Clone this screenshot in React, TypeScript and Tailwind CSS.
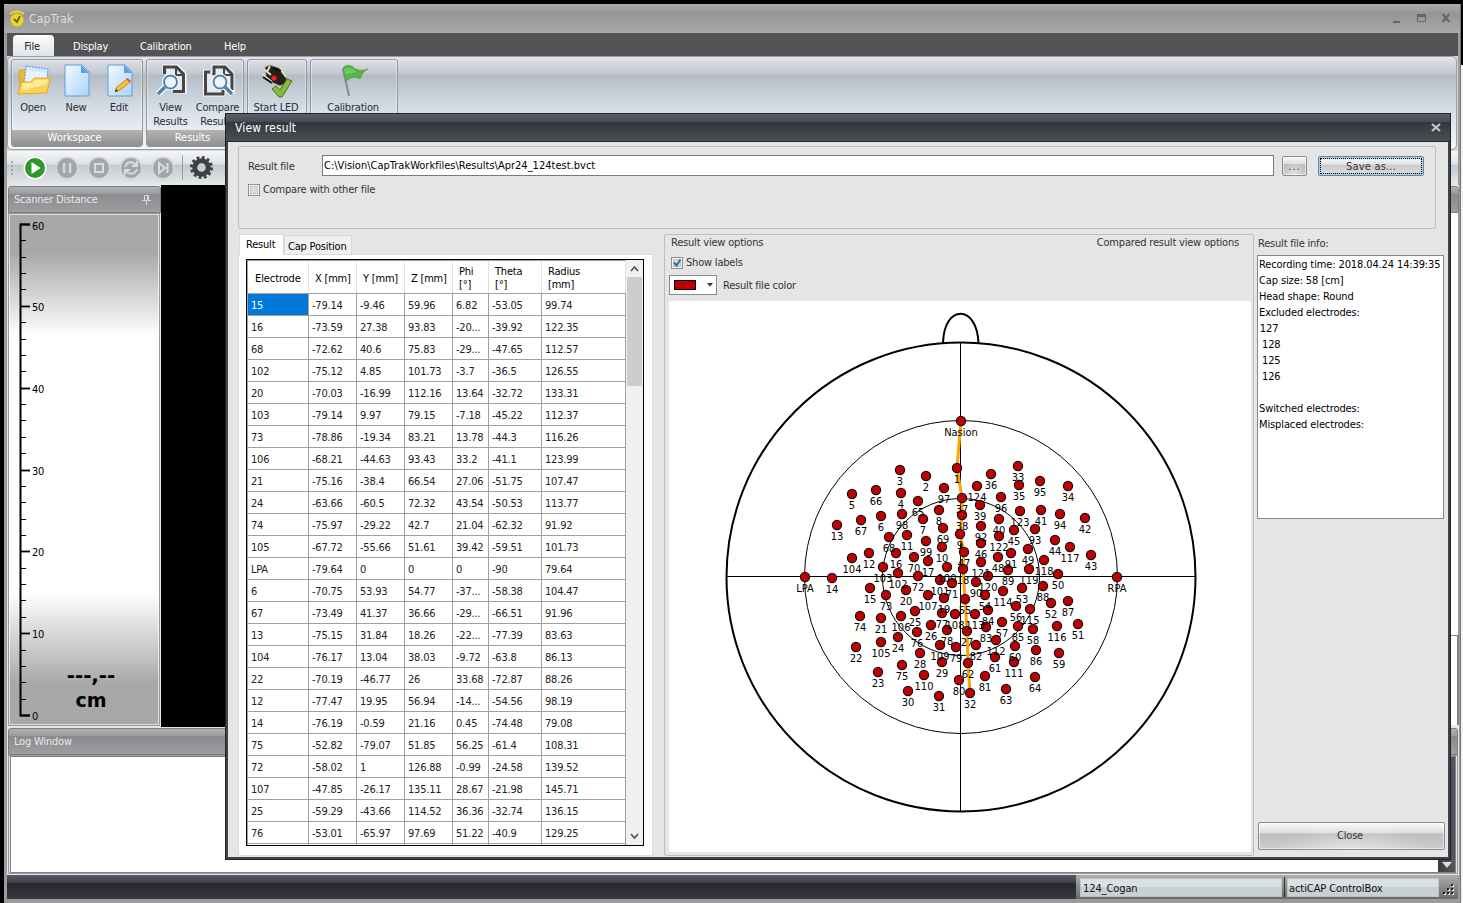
import React from "react";

const ROWS: string[][] = [
  ["15", "-79.14", "-9.46", "59.96", "6.82", "-53.05", "99.74"],
  ["16", "-73.59", "27.38", "93.83", "-20...", "-39.92", "122.35"],
  ["68", "-72.62", "40.6", "75.83", "-29...", "-47.65", "112.57"],
  ["102", "-75.12", "4.85", "101.73", "-3.7", "-36.5", "126.55"],
  ["20", "-70.03", "-16.99", "112.16", "13.64", "-32.72", "133.31"],
  ["103", "-79.14", "9.97", "79.15", "-7.18", "-45.22", "112.37"],
  ["73", "-78.86", "-19.34", "83.21", "13.78", "-44.3", "116.26"],
  ["106", "-68.21", "-44.63", "93.43", "33.2", "-41.1", "123.99"],
  ["21", "-75.16", "-38.4", "66.54", "27.06", "-51.75", "107.47"],
  ["24", "-63.66", "-60.5", "72.32", "43.54", "-50.53", "113.77"],
  ["74", "-75.97", "-29.22", "42.7", "21.04", "-62.32", "91.92"],
  ["105", "-67.72", "-55.66", "51.61", "39.42", "-59.51", "101.73"],
  ["LPA", "-79.64", "0", "0", "0", "-90", "79.64"],
  ["6", "-70.75", "53.93", "54.77", "-37...", "-58.38", "104.47"],
  ["67", "-73.49", "41.37", "36.66", "-29...", "-66.51", "91.96"],
  ["13", "-75.15", "31.84", "18.26", "-22...", "-77.39", "83.63"],
  ["104", "-76.17", "13.04", "38.03", "-9.72", "-63.8", "86.13"],
  ["22", "-70.19", "-46.77", "26", "33.68", "-72.87", "88.26"],
  ["12", "-77.47", "19.95", "56.94", "-14...", "-54.56", "98.19"],
  ["14", "-76.19", "-0.59", "21.16", "0.45", "-74.48", "79.08"],
  ["75", "-52.82", "-79.07", "51.85", "56.25", "-61.4", "108.31"],
  ["72", "-58.02", "1", "126.88", "-0.99", "-24.58", "139.52"],
  ["107", "-47.85", "-26.17", "135.11", "28.67", "-21.98", "145.71"],
  ["25", "-59.29", "-43.66", "114.52", "36.36", "-32.74", "136.15"],
  ["76", "-53.01", "-65.97", "97.69", "51.22", "-40.9", "129.25"],
];

const DOTS: [string, number, number][] = [
  ["Nasion", 961, 421], ["1", 957, 468], ["3", 900, 470], ["2", 926, 476], ["97", 944, 488],
  ["66", 876, 490], ["5", 852, 494], ["4", 901, 493], ["65", 918, 501], ["37", 962, 498],
  ["8", 939, 510], ["98", 902, 514], ["6", 881, 516], ["7", 923, 519], ["67", 861, 520],
  ["38", 962, 515], ["13", 837, 525], ["69", 943, 528], ["11", 907, 535], ["68", 889, 537],
  ["9", 960, 534], ["99", 926, 541], ["10", 942, 547], ["47", 964, 552], ["12", 869, 553],
  ["104", 852, 558], ["16", 896, 553], ["70", 914, 557], ["17", 928, 561], ["33", 1018, 466],
  ["36", 991, 474], ["35", 1019, 485], ["95", 1040, 481], ["34", 1068, 486], ["124", 977, 486],
  ["96", 1001, 497], ["39", 980, 505], ["123", 1020, 511], ["41", 1041, 510], ["94", 1060, 514],
  ["42", 1085, 518], ["40", 999, 519], ["92", 981, 526], ["45", 1014, 530], ["93", 1035, 529],
  ["122", 999, 536], ["44", 1055, 540], ["46", 981, 543], ["117", 1070, 547], ["49", 1028, 549],
  ["91", 1011, 553], ["48", 998, 557], ["43", 1091, 555], ["118", 1044, 560], ["121", 981, 562],
  ["89", 1008, 570], ["119", 1029, 569], ["50", 1058, 574], ["RPA", 1117, 577], ["120", 988, 576],
  ["18", 963, 569], ["90", 976, 582], ["88", 1043, 586], ["53", 1022, 588], ["114", 1003, 591],
  ["54", 985, 595], ["55", 965, 599], ["52", 1051, 603], ["87", 1068, 601], ["56", 1016, 606],
  ["115", 1030, 609], ["84", 988, 610], ["113", 975, 614], ["108", 955, 614], ["57", 1002, 622],
  ["116", 1057, 626], ["51", 1078, 624], ["85", 1018, 626], ["83", 986, 627], ["58", 1033, 629],
  ["27", 967, 631], ["112", 996, 640], ["82", 976, 645], ["79", 956, 647], ["60", 1015, 646],
  ["86", 1036, 650], ["59", 1059, 653], ["61", 995, 657], ["111", 1014, 662], ["62", 968, 663],
  ["81", 985, 676], ["80", 959, 680], ["64", 1035, 677], ["63", 1006, 689], ["32", 970, 693],
  ["100", 947, 567], ["103", 883, 567], ["102", 898, 573], ["72", 918, 576], ["101", 940, 580],
  ["71", 952, 583], ["14", 832, 578], ["15", 870, 588], ["20", 906, 590], ["73", 886, 595],
  ["107", 928, 595], ["19", 944, 598], ["25", 915, 611], ["77", 942, 613], ["74", 860, 616],
  ["106", 901, 616], ["21", 881, 618], ["26", 931, 625], ["78", 947, 630], ["76", 917, 632],
  ["24", 898, 637], ["105", 881, 642], ["109", 940, 645], ["22", 856, 647], ["28", 920, 653],
  ["29", 942, 662], ["75", 902, 665], ["23", 878, 672], ["110", 924, 675], ["30", 908, 691],
  ["31", 939, 696], ["LPA", 805, 577],
];

const MIDLINE = "961,421 957,468 962,498 962,515 960,534 964,552 963,569 965,599 967,631 968,663 970,693";

const OpenIcon = () => (
  <svg width="34" height="34" viewBox="0 0 34 34">
    <path d="M2 8l1-2h7l2 3v20H3z" fill="#f0b72c" stroke="#dc9a1c" strokeWidth=".8" />
    <path d="M9 2l22 3-2 20H6z" fill="#cfe8fb" stroke="#4d9ad6" strokeDasharray="2 1" />
    <path d="M10 6l20 3-2 15H7z" fill="#e4f3fe" />
    <path d="M1 30l3-12h10l3-4h16l-3 15z" fill="#fbd25a" stroke="#eba51f" />
    <path d="M4 27l2-8h9l3-3h13l-1 4z" fill="#fff0a8" opacity=".8" />
  </svg>
);
const PageShape = () => (
  <>
    <defs>
      <linearGradient id="pg" x1="0" y1="0" x2="1" y2="1">
        <stop offset="0" stopColor="#f4faff" />
        <stop offset="1" stopColor="#a9d4f8" />
      </linearGradient>
    </defs>
    <path d="M1 1h17l7 7v24H1z" fill="url(#pg)" stroke="#5c9fdc" />
    <path d="M17 1v8h8z" fill="#5aa2e2" />
  </>
);
const NewIcon = () => (
  <svg width="26" height="34" viewBox="0 0 26 34"><PageShape /></svg>
);
const EditIcon = () => (
  <svg width="26" height="34" viewBox="0 0 26 34">
    <PageShape />
    <path d="M8 28l2-5 10-8 3 3-10 8z" fill="#fbc62d" stroke="#c47c14" />
    <path d="M19 15l2-1 3 3-1 2z" fill="#e4573d" />
    <path d="M8 28l1-3 2 2z" fill="#333" />
  </svg>
);
const ViewIcon = () => (
  <svg width="32" height="34" viewBox="0 0 32 34">
    <path d="M9 10V3h12l7 7v17H17" fill="#eef0f3" stroke="#fff" strokeWidth="5" />
    <path d="M8.500 10V3h12l7 7v17.500H17" fill="#e6e9ee" stroke="#454545" strokeWidth="3" />
    <path d="M20 2v9h8" fill="none" stroke="#454545" strokeWidth="2" />
    <path d="M9 23l-7 7" stroke="#fff" strokeWidth="6" />
    <circle cx="14.500" cy="18" r="8.500" fill="#fff" />
    <circle cx="14.500" cy="18" r="6.500" fill="#edf4fa" stroke="#4f84b0" strokeWidth="2" />
    <path d="M9 23l-7 7" stroke="#4f84b0" strokeWidth="3.500" />
  </svg>
);
const CompareIcon = () => (
  <svg width="32" height="34" viewBox="0 0 32 34">
    <path d="M6 8H2v22h18v-4M11 9V3h11l7 7v17h-5" fill="#eef0f3" stroke="#fff" strokeWidth="5" />
    <path d="M7 8H2.500v22H20v-5" fill="#e6e9ee" stroke="#454545" strokeWidth="3" />
    <path d="M11 11V3h11l7 7v16" fill="#e6e9ee" stroke="#454545" strokeWidth="3" />
    <path d="M21 2v9h8" fill="none" stroke="#454545" strokeWidth="2" />
    <path d="M22 23l7 7" stroke="#fff" strokeWidth="6" />
    <circle cx="17" cy="18" r="8.500" fill="#fff" />
    <circle cx="17" cy="18" r="6.500" fill="#edf4fa" stroke="#4f84b0" strokeWidth="2" />
    <path d="M22 23l7 7" stroke="#4f84b0" strokeWidth="3.500" />
  </svg>
);
const LedIcon = () => (
  <svg width="34" height="34" viewBox="0 0 34 34">
    <path d="M5 3l5-2 9 3 7 8 1 7-7 3-9-4-8-4 3-3z" fill="#26201c" stroke="#b1a48c" />
    <path d="M2 10l10 8M5 6l6 5M10 2l-3 6M25 18l5 4M20 5l6 8" stroke="#e6dcc4" strokeWidth="2" />
    <path d="M3 13l9 6M13 4l8 3" stroke="#15110f" strokeWidth="2" />
    <circle cx="14" cy="14" r="2.500" fill="#f31e1e" />
    <path d="M12 25l4-3 4 4 7-11 5 2-10 16h-3z" fill="#86b93c" stroke="#47751c" />
  </svg>
);
const FlagIcon = () => (
  <svg width="30" height="34" viewBox="0 0 30 34">
    <path d="M4 5l6 27" stroke="#8b8f93" strokeWidth="2.200" />
    <path d="M4 4c4-4 8-3 11 0 4 3 9 3 14 1-5 2-6 6-8 10-4-3-9-2-14 2z" fill="#56b544" stroke="#469c38" strokeWidth=".7" />
    <path d="M5 5c5-3 8 0 12 2-3 4-6 1-11 4z" fill="#7fd06b" opacity=".7" />
  </svg>
);
const Gear = () => (
  <svg width="25" height="25" viewBox="-12.500 -12.500 25 25" className="-ml-[1px]">
    <circle r="10" fill="none" stroke="#3f4144" strokeWidth="3" strokeDasharray="2.800 2.436" />
    <circle r="6.800" fill="none" stroke="#3f4144" strokeWidth="5" />
  </svg>
);

const ToolButton = ({ on, children }: { on?: boolean; children: React.ReactNode }) => (
  <svg width="24" height="24" viewBox="0 0 24 24" className="mr-2">
    <circle cx="12" cy="12" r="11.500" fill={on ? "#fff" : "#d3d6da"} />
    <circle cx="12" cy="12" r="10" fill={on ? "#2f9730" : "#a3a5a7"} />
    {children}
  </svg>
);

const RibbonItem = ({ icon, label, w }: { icon: React.ReactNode; label: string; w: string }) => (
  <div className={"flex shrink-0 flex-col items-center text-center leading-[14px] whitespace-pre " + w}>
    <div className="flex h-[36px] items-center">{icon}</div>
    <div className="mt-[2px] pr-[2px]">{label}</div>
  </div>
);

const Group = ({ w, title, children }: { w: string; title: string; children: React.ReactNode }) => (
  <div className={"flex h-[88px] shrink-0 flex-col overflow-hidden rounded-[3px] border border-[#92979e] shadow-[inset_0_0_0_1px_#ffffff60] " + w}>
    <div className="flex h-[71px] justify-center pt-[3px]">{children}</div>
    <div className="h-[16px] bg-linear-to-b from-[#b4b4b4] to-[#8f8f8f] pr-[5px] text-center leading-[16px] tracking-[0px] text-white">{title}</div>
  </div>
);

const PanelHeader = ({ children }: { children?: React.ReactNode }) => (
  <div className="flex h-[27px] shrink-0 items-center justify-between rounded-t-[3px] border border-[#7d7e80] bg-[linear-gradient(#b0b1b4,#9a9b9d_28%,#8a8b8d_30%,#9c9ea2)] px-[5px] pt-[2px] text-[#e8e8e8]">
    {children}
  </div>
);

const Ruler = () => (
  <svg width="60" height="511" viewBox="0 0 60 511">
    <g stroke="#000" fill="none">
      <path d="M21 10.500H11.500V501.500H21" strokeWidth="2" />
      {Array.from({ length: 31 }, (_, i) => {
        const y = 10 + (i * 491) / 30;
        const major = i % 5 === 0;
        return <path key={i} d={`M11 ${Math.round(y)}.5H${major ? 21 : 17}`} strokeWidth={major ? 1.8 : 1} />;
      })}
    </g>
    {[60, 50, 40, 30, 20, 10, 0].map((n, i) => (
      <text key={n} x={23} y={15.500 + i * 81.700} fontSize="11">{n}</text>
    ))}
  </svg>
);

const HeadPlot = () => (
  <svg width="582" height="551" viewBox="669 301 582 551" className="block bg-white tracking-normal">
    <g fill="none" stroke="#000">
      <path d="M943 343C944 304 977 304 978.500 343" strokeWidth="2" />
      <circle cx="961" cy="577" r="234.500" strokeWidth="2" />
      <circle cx="961" cy="577" r="156.500" strokeWidth="1" />
      <circle cx="961" cy="577" r="78.500" strokeWidth="1" />
      <path d="M960.500 343V811M726 576.500H1196" strokeWidth="1" />
      <polyline points={MIDLINE} stroke="#ffa500" strokeWidth="3" />
    </g>
    {DOTS.map(([n, x, y]) => (
      <circle key={n} cx={x} cy={y} r="4.600" fill="#c00000" stroke="#111" strokeWidth="1.200" />
    ))}
    <g fontSize="11" textAnchor="middle" fill="#000">
      {DOTS.map(([n, x, y]) => (
        <text key={n} x={x} y={y + 15}>{n}</text>
      ))}
    </g>
  </svg>
);

const COLS = "grid grid-cols-[61px_48px_48px_48px_36px_53px_84px]";

const ResultTable = () => (
  <div className="flex h-[587px] w-[398px] border border-black bg-white">
    <div className="h-[585px] w-[379px] overflow-hidden border-t border-l border-[#a0a0a0]">
      <div className={COLS + " h-[33px] border-b border-[#a0a0a0] leading-[13px] text-black"}>
        {["Electrode", "X [mm]", "Y [mm]", "Z [mm]", "Phi\n[°]", "Theta\n[°]", "Radius\n[mm]"].map((h, i) => (
          <div key={h} className={"flex items-center border-r border-[#e0e0e0] pt-[2px] whitespace-pre " + (i === 0 ? "pl-[7px] tracking-[-0.1px]" : "pl-[6px]")}>{h}</div>
        ))}
      </div>
      {ROWS.map((r) => (
        <div key={r[0]} className={COLS + " h-[22px] leading-[23px]"}>
          {r.map((c, i) => (
            <div key={i} className={"h-[22px] border-r border-b border-[#a0a0a0] pl-[3px] whitespace-nowrap " + (r[0] === "15" && i === 0 ? "bg-[#0078d7] text-white" : "text-[#222]")}>{c}</div>
          ))}
        </div>
      ))}
      <div className={COLS + " h-[22px]"}>
        {ROWS[0].map((_, i) => <div key={i} className="border-r border-[#a0a0a0]" />)}
      </div>
    </div>
    <div className="flex w-[17px] flex-col items-center justify-between bg-[#f0f0f0]">
      <svg width="17" height="17"><path d="M5 11l3.500-4 3.500 4" fill="none" stroke="#505050" strokeWidth="1.600" /></svg>
      <div className="mb-auto h-[109px] w-[15px] bg-[#cdcdcd]" />
      <svg width="17" height="17"><path d="M5 6l3.500 4 3.500-4" fill="none" stroke="#505050" strokeWidth="1.600" /></svg>
    </div>
  </div>
);

const Check = ({ on }: { on?: boolean }) => (
  <svg width="12" height="12" viewBox="0 0 12 12" className="shrink-0">
    <rect x=".5" y=".5" width="11" height="11" fill="#f4f4f4" stroke="#8e8f8f" />
    <rect x="2.500" y="2.500" width="7" height="7" fill="#dcdcdc" stroke="#c4c4c4" />
    {on && <path d="M3 5.500l2.500 3L9.500 2.500" fill="none" stroke="#2d6cb5" strokeWidth="2" />}
  </svg>
);

const BTN = "flex items-center justify-center rounded-[2px] border border-[#8b8c8e] bg-[radial-gradient(ellipse_at_50%_100%,#ffffff70,#ffffff00_60%),linear-gradient(#fafafa,#dedede_38%,#bdbdbf_42%,#cdcdcf)] shadow-[inset_0_0_0_1px_#ffffff80]";

const Dialog = () => (
  <div className="absolute top-[113px] left-[225px] flex h-[747px] w-[1226px] flex-col border border-[#1f2226] bg-[#3f4349] px-[2px] pb-[2px]">
    <div className="-mx-[2px] flex h-[28px] shrink-0 items-center justify-between border-b border-[#24262a] bg-[linear-gradient(#5a5f69,#484c55_28%,#34363a_31%,#4b4f56)] pr-[9px] pl-[9px]">
      <span className="text-[12px] tracking-[0.15px] text-white">View result</span>
      <svg width="10" height="10"><path d="M1 1l8 7M9 1l-8 7" stroke="#c3c9d0" strokeWidth="2.200" /></svg>
    </div>
    <div className="flex grow flex-col bg-[#e5e5e5] pt-[4px] pl-[10px] text-[#333]">
      <div className="flex h-[83px] w-[1198px] flex-col rounded-[2px] border border-[#bdbdbd] pt-[8px] pl-[9px]">
        <div className="flex h-[21px] items-center">
          <span className="w-[74px] pt-[3px]">Result file</span>
          <div className="flex h-[21px] w-[952px] items-center border border-[#7a7a7a] bg-white pt-px pl-[1px] tracking-[0.01px] text-black">C:\Vision\CapTrakWorkfiles\Results\Apr24_124test.bvct</div>
          <div className={BTN + " ml-2 h-[20px] w-[25px] pt-1 tracking-[1px]"}>...</div>
          <div className="ml-[11px] flex h-[20px] w-[106px] items-center justify-center rounded-[2px] border border-[#74828d] bg-[linear-gradient(#fafafa,#e6e6e6_40%,#cbcbcd_45%,#dcdcde)] p-px shadow-[inset_0_0_0_2px_#9fd0f0]">
            <span className="flex h-full w-full items-center justify-center border border-dotted border-black pt-[3px] tracking-[0.2px]">Save as...</span>
          </div>
        </div>
        <div className="mt-[7px] flex h-[14px] items-center gap-[3px]"><Check /><span className="pt-px">Compare with other file</span></div>
      </div>
      <div className="mt-[5px] flex">
        <div className="flex w-[415px] flex-col">
          <div className="flex h-[20px] items-end pl-[1px] text-black">
            <div className="z-10 -mb-px h-[21px] w-[45px] border border-b-0 border-[#d9d9d9] bg-white pl-[6px] leading-[19px]">Result</div>
            <div className="h-[19px] w-[68px] border border-b-0 border-[#d9d9d9] bg-[#f0f0f0] pl-[3px] leading-[21px]">Cap Position</div>
          </div>
          <div className="h-[602px] w-[415px] border border-[#dcdcdc] bg-white pt-[4px] pl-[7px]"><ResultTable /></div>
        </div>
        <div className="ml-[11px] h-[622px] w-[590px] rounded-[2px] border border-[#bdbdbd] pl-[4px]">
          <div className="flex h-[17px] items-center justify-between pr-[14px] pl-[2px]">
            <span>Result view options</span><span>Compared result view options</span>
          </div>
          <div className="mt-[3px] flex h-[16px] items-center gap-[3px] pl-[2px]"><Check on /><span>Show labels</span></div>
          <div className="mt-[4px] flex h-[20px] items-center gap-[6px]">
            <div className="flex h-[20px] w-[48px] items-center justify-between border border-[#8a8a8a] bg-white pr-[3px] pl-[4px]">
              <div className="h-[10px] w-[22px] border border-black bg-[#c00000]" />
              <svg width="7" height="4"><path d="M1 0h6L4 3.500z" fill="#333" /></svg>
            </div>
            <span className="pt-[3px]">Result file color</span>
          </div>
          <div className="mt-[6px]"><HeadPlot /></div>
        </div>
        <div className="ml-[3px] flex h-[622px] w-[190px] flex-col">
          <div className="h-[21px] pl-[1px] leading-[19px]">Result file info:</div>
          <div className="h-[264px] w-[187px] overflow-hidden border border-[#828790] bg-white pt-[1px] pl-[1px] leading-[16px] tracking-[-0.12px] whitespace-pre text-black">
            {"Recording time: 2018.04.24 14:39:35\nCap size: 58 [cm]\nHead shape: Round\nExcluded electrodes:\n\u200a127\n 128\n 125\n 126\n\nSwitched electrodes:\nMisplaced electrodes:"}
          </div>
          <div className={BTN + " mt-auto mb-[6px] ml-px h-[28px] w-[187px] pt-px pr-[3px]"}>Close</div>
        </div>
      </div>
    </div>
  </div>
);

export default function App() {
  return (
    <div className="relative flex h-[903px] w-[1463px] overflow-hidden bg-black pt-[4px] pl-[4px] font-['DejaVu_Sans_Condensed','DejaVu_Sans',sans-serif] text-[11px] tracking-[-0.2px] text-[#2b2b3a]">
      <div className="flex h-[899px] w-[1457px] shrink-0 flex-col border-r border-[#777] bg-[#9b9b9d]">
        <div className="flex h-[29px] shrink-0 items-center bg-[linear-gradient(#abacae,#9a9a9c_28%,#949495_31%,#a8a9ac)] px-[5px] text-[#dedede]">
          <svg width="16" height="17" viewBox="0 0 16 17">
            <circle cx="8" cy="10" r="6.500" fill="#eed51b" />
            <path d="M1 4q7-5 14 0" fill="none" stroke="#f0d91b" strokeWidth="2" />
            <path d="M5 9l3 3 3-6" fill="none" stroke="#6d5a10" strokeWidth="1.800" />
          </svg>
          <span className="ml-[4px] grow text-[12px] tracking-[0.2px]">CapTrak</span>
          <svg width="60" height="12" className="mr-[5px]">
            <path d="M3 9h7" stroke="#666" strokeWidth="2" />
            <path d="M27.500 2v6.500h8V2" fill="none" stroke="#666" />
            <path d="M27 2.500h9" stroke="#666" strokeWidth="3" />
            <path d="M52.500 1l7 8M59.500 1l-7 8" stroke="#666" strokeWidth="2.200" />
          </svg>
        </div>
        <div className="ml-[3px] flex h-[23px] w-[1451px] shrink-0 items-end bg-[#535353] pl-[6px] leading-[23px] text-white">
          <div className="h-[21px] w-[41px] rounded-t-[4px] bg-linear-to-b from-[#fdfdfe] to-[#e0e3e8] pr-[3px] text-center text-[#222]">File</div>
          <div className="ml-[19px] h-[21px] w-[67px]">Display</div>
          <div className="h-[21px] w-[84px]">Calibration</div>
          <div className="h-[21px]">Help</div>
        </div>
        <div className="ml-[3px] h-[95px] w-[1451px] shrink-0 bg-[#d5d7da]">
          <div className="flex h-[94px] w-[1450px] gap-[3px] rounded-[5px] border border-[#9a9da2] bg-[linear-gradient(#e2e5e9,#c3c8d0_18%,#b4bcc6_20%,#d9e1e8_60%,#f4f6f8)] pt-[2px] pl-[3px]">
            <Group w="w-[132px]" title="Workspace">
              <RibbonItem w="w-[43px]" icon={<OpenIcon />} label="Open" />
              <RibbonItem w="w-[43px]" icon={<NewIcon />} label="New" />
              <RibbonItem w="w-[43px]" icon={<EditIcon />} label="Edit" />
            </Group>
            <Group w="w-[98px]" title="Results">
              <RibbonItem w="w-[47px]" icon={<ViewIcon />} label={"View\nResults"} />
              <RibbonItem w="w-[47px]" icon={<CompareIcon />} label={"Compare\nResults"} />
            </Group>
            <Group w="w-[60px]" title=""><RibbonItem w="w-[56px]" icon={<LedIcon />} label="Start LED" /></Group>
            <Group w="w-[88px]" title=""><RibbonItem w="w-[86px]" icon={<FlagIcon />} label="Calibration" /></Group>
          </div>
        </div>
        <div className="ml-[3px] flex h-[34px] w-[1451px] shrink-0 items-center bg-[linear-gradient(#f4f6f7,#dfe3e6_38%,#c3cacf_42%,#e4e9eb)] pb-px pl-[4px]">
          <svg width="4" height="16" className="mr-[8px]">
            {[1, 5, 9, 13].map((y) => <rect key={y} x="0" y={y} width="2" height="2" fill="#a2a6aa" />)}
          </svg>
          <ToolButton on><path d="M8.500 6v12l9-6z" fill="#fff" /></ToolButton>
          <ToolButton><path d="M9 7v10M15 7v10" stroke="#d3d6da" strokeWidth="2.500" /></ToolButton>
          <ToolButton><rect x="8" y="8" width="8" height="8" fill="none" stroke="#dadcdf" strokeWidth="2" /></ToolButton>
          <ToolButton><path d="M6 11c2-6 8-6 11-2M18 13c-2 6-8 6-11 2M18 5v5h-5M6 19v-5h5" fill="none" stroke="#dadcdf" strokeWidth="2" /></ToolButton>
          <ToolButton><path d="M8 7l6 5-6 5zM16.500 7v10" fill="none" stroke="#dadcdf" strokeWidth="2" /></ToolButton>
          <div className="mr-[7px] -ml-px h-[25px] w-px bg-[#9a9ea3]" />
          <Gear />
        </div>
        <div className="ml-[3px] flex h-[542px] w-[1452px] shrink-0 bg-[#e6e6e6]">
          <div className="flex w-[154px] flex-col pt-px pl-px">
            <PanelHeader>
              <span>Scanner Distance</span>
              <svg width="9" height="11" className="mr-[4px]"><path d="M2.500 5V.5h4V5M0 5.500h9M4.500 6v4M5.500 0v5" fill="none" stroke="#d5d8dc" /></svg>
            </PanelHeader>
            <div className="flex h-[513px] w-[152px] border border-[#999] bg-[linear-gradient(#a8a8a8_7.500%,#fff_24%,#fff_74%,#a8a8a8_92%)] outline-1 -outline-offset-2 outline-white/60">
              <Ruler />
              <div className="mt-[449px] -ml-[6px] w-[60px] pr-1 text-center font-['DejaVu_Sans',sans-serif] text-[19px] leading-[25px] font-bold tracking-[-0.1px] text-black">
                <span className="-mx-2 text-[20px]">---,--</span><br />cm
              </div>
            </div>
          </div>
          <div className="w-[1282px] bg-black" />
          <div className="flex grow flex-col pt-px">
            <PanelHeader />
            <div className="h-[422px] border-r border-[#999] bg-white" />
            <div className="h-[90px] border-t border-r-2 border-[#857f86] bg-white" />
          </div>
        </div>
        <div className="ml-[3px] flex h-[148px] w-[1452px] shrink-0 flex-col bg-[#e6e6e6] px-px pt-px">
          <PanelHeader><span>Log Window</span></PanelHeader>
          <div className="flex h-[119px] items-end justify-end border border-[#999] p-px pb-0">
            <div className="flex h-[117px] w-full items-end justify-end border border-[#808285] bg-white">
              <div className="flex h-full w-[17px] items-end justify-center bg-linear-to-r from-[#3b3d41] to-[#55585c] pb-[4px]">
                <svg width="10" height="6"><path d="M0 0h10L5 6z" fill="#ddd" /></svg>
              </div>
            </div>
          </div>
        </div>
        <div className="ml-[3px] flex h-[24px] w-[1451px] shrink-0 items-center bg-[linear-gradient(#565a65,#40434c_31%,#28292c_34%,#38393e)]">
          <div className="grow" />
          <div className="flex h-[24px] w-[382px] items-center bg-linear-to-b from-[#adadae] to-[#68696b] pl-[4px] text-[#111]">
            <div className="h-[19px] w-[202px] border border-[#bcc4c7] bg-[linear-gradient(#dbe1e3_45%,#c7d0d3_50%)] pl-[2px] leading-[19px] tracking-[-0.1px]">124_Cogan</div>
            <div className="mx-[2px] h-[20px] w-px bg-[#333]" />
            <div className="h-[19px] w-[152px] border border-[#bcc4c7] bg-[linear-gradient(#dbe1e3_45%,#c7d0d3_50%)] pl-[1px] leading-[19px] tracking-[-0.08px]">actiCAP ControlBox</div>
            <svg width="12" height="12" className="mt-[5px] ml-[4px]">
              {[[8, 0], [4, 4], [8, 4], [0, 8], [4, 8], [8, 8]].map(([x, y]) => (
                <g key={`${x}-${y}`}>
                  <rect x={x + 1} y={y + 1} width="2" height="2" fill="#eee" />
                  <rect x={x} y={y} width="2" height="2" fill="#222" />
                </g>
              ))}
            </svg>
          </div>
        </div>
      </div>
      <div className="mt-[61px] h-[838px] w-[2px] bg-[#f3f3f3]" />
      <Dialog />
    </div>
  );
}
